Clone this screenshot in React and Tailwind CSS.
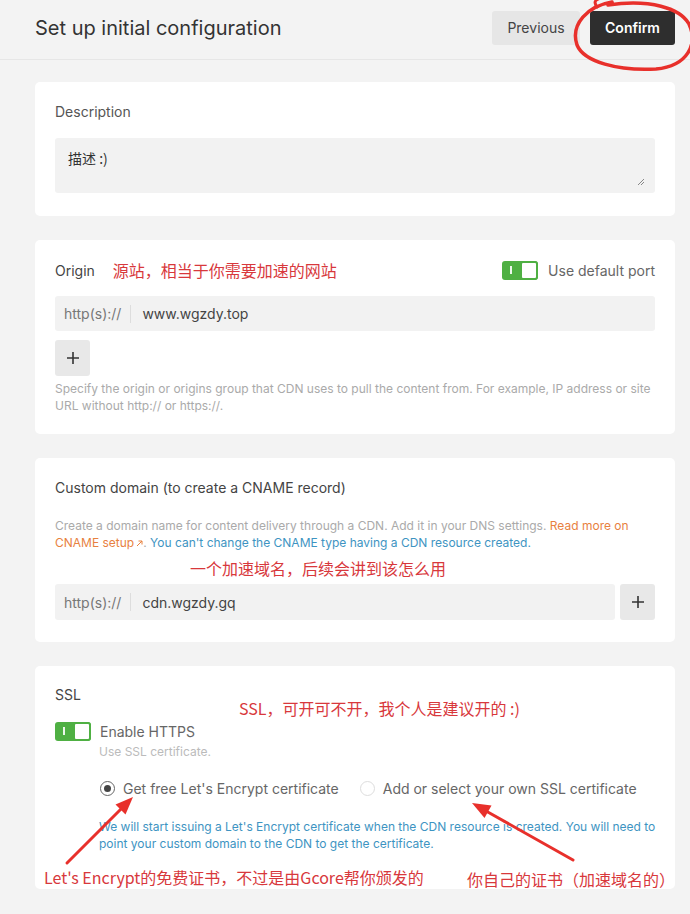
import React from "react";

const ui = { fontFamily: "Inter, 'Noto Sans', 'Noto Sans CJK SC', sans-serif" };
const cjk = { fontFamily: "'Noto Sans CJK SC', 'Noto Sans', sans-serif" };

function Toggle() {
  return (
    <div className="relative flex h-[19px] w-[36px] shrink-0 overflow-hidden rounded-[3px] bg-[#4fb043]">
      <div className="flex w-[18px] items-center justify-center">
        <div className="h-[8px] w-[1.5px] bg-white/90" />
      </div>
      <div className="h-full w-[18px] rounded-[3px] border-[2px] border-[#4fb043] bg-white" />
    </div>
  );
}

function Plus() {
  return (
    <svg width="14" height="14" viewBox="0 0 14 14">
      <path d="M7 1v12M1 7h12" stroke="#333" strokeWidth="1.6" />
    </svg>
  );
}

function ExtArrow() {
  return (
    <svg className="ml-[2px] inline-block align-baseline" width="7" height="7" viewBox="0 0 7 7">
      <path d="M1 6L6 1M2.5 1H6V4.5" fill="none" stroke="#e8813f" strokeWidth="1" />
    </svg>
  );
}

function Card({ children, className = "" }) {
  return (
    <div className={"ml-[35px] mr-[15px] rounded-[5px] bg-white px-[20px] " + className}>
      {children}
    </div>
  );
}

function Overlay() {
  return (
    <svg
      className="pointer-events-none absolute left-0 top-0"
      width="690"
      height="914"
      viewBox="0 0 690 914"
    >
      <path
        d="M612 2 C588 6, 570 24, 577 45 C584 62, 618 71, 656 69 C688 66, 698 44, 689 24 C680 8, 650 -1, 608 5"
        fill="none"
        stroke="#e8302b"
        strokeWidth="3.5"
        strokeLinecap="round"
      />
      <path d="M598 8 C592 2, 596 -2, 604 -2" fill="none" stroke="#e8302b" strokeWidth="3" />
      <line x1="67" y1="863" x2="122" y2="808" stroke="#e8302b" strokeWidth="3" strokeLinecap="round" />
      <polygon points="133,797 125.5,814.5 115.5,804.5" fill="#e8302b" />
      <line x1="573" y1="860" x2="486" y2="811" stroke="#e8302b" strokeWidth="3" strokeLinecap="round" />
      <polygon points="472,803 491.5,805.5 484.5,818" fill="#e8302b" />
    </svg>
  );
}

export default function App() {
  return (
    <div className="relative h-[914px] w-[690px] overflow-hidden bg-[#f3f3f3]" style={ui}>
      {/* Header */}
      <div className="flex h-[60px] items-center justify-between border-b border-[#e6e6e6] pb-[4px] pl-[35px] pr-[15px]">
        <div className="text-[20px] text-[#333]">Set up initial configuration</div>
        <div className="flex gap-[10px]">
          <button className="h-[34px] w-[88px] rounded-[3px] bg-[#e6e6e6] text-[14px] text-[#444]">
            Previous
          </button>
          <button className="h-[34px] w-[85px] rounded-[3px] bg-[#2e2e2e] text-[14px] font-semibold text-white">
            Confirm
          </button>
        </div>
      </div>

      <div className="flex flex-col gap-[24px] pt-[22px]">
        {/* Description */}
        <Card className="pb-[23px] pt-[20px]">
          <div className="text-[14px] leading-[20px] text-[#555]">Description</div>
          <div className="relative mt-[16px] h-[55px] rounded-[3px] bg-[#f2f2f2] px-[13px] pt-[10px] text-[14px] text-[#333]" style={cjk}>
            描述 :)
            <svg className="absolute bottom-[7px] right-[10px]" width="9" height="9" viewBox="0 0 9 9">
              <path d="M8 2L2 8M8 5L5 8" stroke="#888" strokeWidth="1" />
            </svg>
          </div>
        </Card>

        {/* Origin */}
        <Card className="pb-[20px] pt-[20px]">
          <div className="flex h-[20px] items-center justify-between">
            <div className="flex items-center">
              <span className="text-[14px] text-[#444]">Origin</span>
              <span className="ml-[18px] text-[16px] text-[#d8383c]" style={cjk}>
                源站，相当于你需要加速的网站
              </span>
            </div>
            <div className="flex items-center gap-[10px]">
              <Toggle />
              <span className="text-[14px] text-[#666]">Use default port</span>
            </div>
          </div>
          <div className="mt-[16px] flex h-[35px] items-center rounded-[3px] bg-[#f2f2f2] text-[14px]">
            <span className="pl-[9px] pr-[9px] text-[#777]">http(s)://</span>
            <span className="h-[18px] w-px bg-[#ddd]" />
            <span className="pl-[11px] text-[#444]">www.wgzdy.top</span>
          </div>
          <div className="mt-[9px] flex h-[36px] w-[35px] items-center justify-center rounded-[3px] bg-[#e8e8e8]">
            <Plus />
          </div>
          <div className="mt-[4px] text-[12px] leading-[17px] text-[#aaa]">
            Specify the origin or origins group that CDN uses to pull the content from. For example, IP address or site URL without http:// or https://.
          </div>
        </Card>

        {/* Custom domain */}
        <Card className="pb-[22px] pt-[20px]">
          <div className="text-[14px] leading-[20px] text-[#444]">Custom domain (to create a CNAME record)</div>
          <div className="mt-[19px] text-[12px] leading-[17px] text-[#aaa]">
            <span>Create a domain name for content delivery through a CDN. Add it in your DNS settings.</span>{" "}
            <span className="text-[#e8813f]">Read more on</span>{" "}
            <span className="text-[#e8813f]">
              CNAME setup
              <ExtArrow />
            </span>
            <span>. </span>
            <span className="text-[#3e94c2]">You can't change the CNAME type having a CDN resource created.</span>
          </div>
          <div className="mt-[6px] pl-[135px] text-[16px] leading-[22px] text-[#d8383c]" style={cjk}>
            一个加速域名，后续会讲到该怎么用
          </div>
          <div className="mt-[5px] flex gap-[5px]">
            <div className="flex h-[36px] flex-1 items-center rounded-[3px] bg-[#f2f2f2] text-[14px]">
              <span className="pl-[9px] pr-[9px] text-[#777]">http(s)://</span>
              <span className="h-[18px] w-px bg-[#ddd]" />
              <span className="pl-[11px] text-[#444]">cdn.wgzdy.gq</span>
            </div>
            <div className="flex h-[36px] w-[35px] items-center justify-center rounded-[3px] bg-[#e8e8e8]">
              <Plus />
            </div>
          </div>
        </Card>

        {/* SSL */}
        <Card className="relative h-[223px] pt-[19px]">
          <div className="text-[14px] leading-[20px] text-[#444]">SSL</div>
          <div className="absolute left-[204px] top-[31px] text-[16px] leading-[22px] text-[#d8383c]" style={cjk}>
            SSL，可开可不开，我个人是建议开的 :)
          </div>
          <div className="mt-[16px] flex h-[20px] items-center gap-[9px]">
            <Toggle />
            <span className="text-[14px] text-[#666]">Enable HTTPS</span>
          </div>
          <div className="ml-[44px] mt-[2px] text-[12px] leading-[17px] text-[#bbb]">Use SSL certificate.</div>
          <div className="ml-[45px] mt-[18px] flex h-[20px] items-center text-[14px] text-[#666]">
            <span className="flex h-[15px] w-[15px] items-center justify-center rounded-full border-[1.5px] border-[#666]">
              <span className="h-[7px] w-[7px] rounded-full bg-[#444]" />
            </span>
            <span className="ml-[8px]">Get free Let's Encrypt certificate</span>
            <span className="ml-[21px] h-[15px] w-[15px] rounded-full border border-[#ddd]" />
            <span className="ml-[8px]">Add or select your own SSL certificate</span>
          </div>
          <div className="-mr-[8px] ml-[44px] mt-[20px] text-[12px] leading-[17px] text-[#3e94c2]">
            We will start issuing a Let's Encrypt certificate when the CDN resource is created. You will need to point your custom domain to the CDN to get the certificate.
          </div>
          <div className="-ml-[11px] -mr-[20px] mt-[12px] flex items-center justify-between whitespace-nowrap text-[16px] leading-[22px] text-[#d8383c]" style={cjk}>
            <span>Let's Encrypt的免费证书，不过是由Gcore帮你颁发的</span>
            <span className="mt-[4px]">你自己的证书（加速域名的）</span>
          </div>
        </Card>
      </div>

      <Overlay />
    </div>
  );
}
